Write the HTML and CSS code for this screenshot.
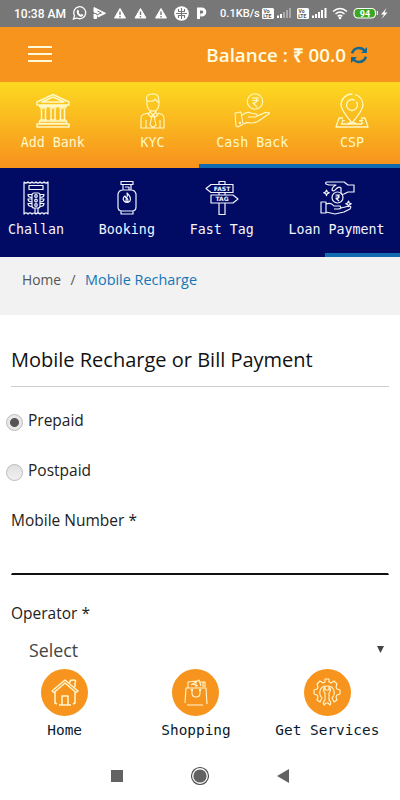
FILE: index.html
```html
<!DOCTYPE html>
<html lang="en">

<head>
    <meta charset="UTF-8">
    <meta name="viewport" content="width=device-width, initial-scale=1.0">
    <title>Mobile Recharge</title>
    <link rel="stylesheet" href="styles.css">
</head>

<body>
    <div class="status-bar">
        <span class="time">10:38 AM</span>
        <svg width="136" height="27" viewBox="72 0 136 27">
            <path d="M73.5 19l1-3.3a6 6 0 1 1 2.4 2.3z" fill="none" stroke="#fff" stroke-width="1.3"/>
            <path d="M77 10.5q.8-1.5 1.7 0l.4 1.2-.6.9q.8 1.5 2.2 2.1l1-.8 1.6.9q0 1.7-1.8 2c-3 0-5.6-3.6-4.5-6.3z" fill="#fff"/>
            <path d="M94 7.5l11.5 5.8-7.5 3.7v-3.5l-4-1.5zM94 14l2.5 1v3.5H94z" fill="#fff" stroke="#fff" stroke-linejoin="round"/>
            <path d="M97.5 11l4 2-4 1.5" fill="none" stroke="#777"/>
            <path d="M120 8.5l5.5 9.5h-11zM140.5 8.5l5.5 9.5h-11zM161 8.5l5.5 9.5h-11z" fill="#fff" stroke="#fff" stroke-linejoin="round"/>
            <path d="M120 11.5v3.5m0 1v1.4M140.5 11.5v3.5m0 1v1.4M161 11.5v3.5m0 1v1.4" stroke="#777" stroke-width="1.4"/>
            <circle cx="181.5" cy="13.5" r="7.3" fill="#fff"/>
            <path d="M176 13.5h11M181.5 8v11M178.5 9v2.5h6V9M178.5 18v-2.5h6V18" fill="none" stroke="#777" stroke-width="1.1"/>
            <path d="M198.5 19V9h3.3a2.7 2.7 0 0 1 0 6h-1.5" fill="none" stroke="#fff" stroke-width="3"/>
        </svg>
        <span class="speed">0.1KB/s</span>
        <svg width="134" height="27" viewBox="261 0 134 27">
            <rect x="262" y="8" width="12" height="11" rx="1.5" fill="#fff"/>
            <rect x="297" y="8" width="12" height="11" rx="1.5" fill="#fff"/>
            <text class="volte" x="263.5" y="13.2">Vo</text>
            <text class="volte" x="263.2" y="18.2">LTE</text>
            <text class="volte" x="298.5" y="13.2">Vo</text>
            <text class="volte" x="298.2" y="18.2">LTE</text>
            <path d="M278 18v-2.5M281 18v-4" stroke="#fff" stroke-width="2"/>
            <path d="M284 18v-6M287 18v-8M290 18V8" stroke="#aaa" stroke-width="2"/>
            <path d="M313 18v-2.5M316 18v-4M319 18v-6M322 18v-8M325.5 18V8" stroke="#fff" stroke-width="2"/>
            <path d="M333 11.5q7-6 14 0M335.5 14q4.5-4 9 0M337.7 16.3q2.3-2 4.6 0" fill="none" stroke="#fff" stroke-width="1.6"/>
            <circle cx="340" cy="18" r="1.3" fill="#fff"/>
            <rect x="354" y="8.5" width="21.5" height="9.5" rx="4" fill="#3aa81e" stroke="#fff" stroke-width="1.2"/>
            <path d="M377.3 11v4" stroke="#fff"/>
            <text class="battery" x="365" y="16.7">94</text>
            <path d="M386.5 8l-5.5 6.5h3l-2.5 4.5 6-6.5h-3z" fill="#fff"/>
        </svg>
    </div>

    <div class="header">
        <div class="menu-button"><span></span><span></span><span></span></div>
        <div class="balance">
            Balance : ₹ 00.0
            <svg width="18" height="18" viewBox="0 0 18 18" fill="none" stroke="#17688f" stroke-width="2.6">
                <path d="M2 7.2Q4 2 9 2q3.5 0 6 3M16 10.8Q14 16 9 16q-3.5 0-6-3"/>
                <path d="M17 1v6h-6zM1 17v-6h6z" fill="#17688f" stroke="none"/>
            </svg>
        </div>
    </div>

    <div class="services services-top">
        <div class="service-list">
            <div class="service">
                <svg width="36" height="36" viewBox="0 0 36 36" stroke-width="1.5">
                    <path d="M2 9L18 1.5 34 9v3H2zM7 9l11-5 11 5zM4 13.5h28M4.5 28h27v2.5h-27zM2 31h32v3H2z"/>
                    <path d="M5 15h7M6.5 16v10.5M10.5 16v10.5M5 27h7M14.5 15h7M16 16v10.5M20 16v10.5M14.5 27h7M24 15h7M25.5 16v10.5M29.5 16v10.5M24 27h7"/>
                </svg>
                <span>Add Bank</span>
            </div>
            <div class="service">
                <svg width="36" height="36" viewBox="0 0 36 36" stroke-width="1.1">
                    <path d="M12 8q-2-7 5-7 7-1 7 7v4q-1 6-6 6t-6-6zM12 8q7 1 8-2l4 4M15 17v2l3 3 3-3v-2M15 19l-2 2 3 3 2-2 2 2 3-2-2-2M18 22l-1.5 3-1.5 7 3 2.5 3-2.5-1.5-7z"/>
                    <path d="M13 20l-5 1.5q-2 1-2 4V35h5v-8M23 20l4 1.5q2 1 2 4V35h-4v-8M11 35h14"/>
                </svg>
                <span>KYC</span>
            </div>
            <div class="service">
                <svg width="36" height="36" viewBox="0 0 36 36" stroke-width="1.1">
                    <circle cx="21" cy="8.5" r="7.7"/>
                    <path d="M18 5h7M18 7.5h7M19 5c5 0 5 5 0 5l4 4"/>
                    <path d="M1 20l6-1 2 12-5 3-2-1zM8 22q5-4 9-2l5 1q3 2-1 3h-7M23 23l7-3q5-1 6 0l-10 7q-4 3-9 3-5-1-7 1M26 22l6-3"/>
                    <circle cx="6" cy="30" r=".6"/>
                </svg>
                <span>Cash Back</span>
            </div>
            <div class="service">
                <svg width="36" height="36" viewBox="0 0 36 36" stroke-width="1.3">
                    <path d="M18 30Q7 17 7 12a11 11 0 0 1 22 0q0 5-11 18z" stroke-dasharray="39 3 90"/>
                    <circle cx="18" cy="12" r="5.5" stroke-dasharray="28 2 9"/>
                    <path d="M9 25H5L2 34h32l-3-9h-4M7 31h21M8 27l3 1M25 28l4-1M14 30h8M7 31l2-3M29 31l-2-3"/>
                </svg>
                <span>CSP</span>
            </div>
        </div>
        <div class="scroll-thumb"></div>
    </div>

    <div class="services services-bottom">
        <div class="service-list">
            <div class="service">
                <svg width="36" height="36" viewBox="0 0 36 36" stroke-width="1.2">
                    <path d="M6 2q2 2 4 0 2 2 4 0 2 2 4 0 2 2 4 0 2 2 4 0 2 2 4 0v32q-2-2-4 0-2-2-4 0-2-2-4 0-2-2-4 0-2-2-4 0-2-2-4 0z"/>
                    <path d="M11 5.5h14v4H11zM14 15q0-2 2-2h4q2 0 2 2v11q0 2-2 2h-4q-2 0-2-2zM17 28v6M20 28v6M14 14.5h-4q0 3 4 3M14 19h-4q0 3 4 3M14 23.5h-4q0 3 4 3M22 14.5h4q0 3-4 3M22 19h4q0 3-4 3M22 23.5h4q0 3-4 3"/>
                    <circle cx="18" cy="16" r="1.3"/><circle cx="18" cy="20.5" r="1.3"/><circle cx="18" cy="25" r="1.3"/>
                </svg>
                <span>Challan</span>
            </div>
            <div class="service">
                <svg width="36" height="36" viewBox="0 0 36 36" stroke-width="1.2">
                    <path d="M12 1.5h12v3H12zM14 5v5M22 5v5M16 7h4v3M9 14q1-4 5-4h8q4 0 5 4v13q0 4-4 4H13q-4 0-4-4zM12 31v3h12v-3"/>
                    <path d="M18 13q5 5 3 8-3 3-6 0-2-3 1-5l1 2q2-1 1-5zM18 18q2 3 0 4-2-1 0-4"/>
                </svg>
                <span>Booking</span>
            </div>
            <div class="service">
                <svg width="36" height="36" viewBox="0 0 36 36" stroke-width="1.2">
                    <path d="M15 5V1.5h6V5M7 4.5h22v8H7l-5-4zM15 12.5v2.5M21 12.5v2.5M7 15h22l5 4-5 4H7zM15 23v11.5h6V23"/>
                    <text class="sign" x="18" y="10.7">FAST</text>
                    <text class="sign" x="18" y="21.2">TAG</text>
                </svg>
                <span>Fast Tag</span>
            </div>
            <div class="service">
                <svg width="36" height="36" viewBox="0 0 36 36" stroke-width="1.2">
                    <path d="M35 5h-6l-4-3H8q-2 0-1 2l3 1h7q-4 2-4 5 2 2 4-1 3-3 5-1v4q0 3 3 2l4-2h6z"/>
                    <circle cx="18.5" cy="17.5" r="5.5"/>
                    <path d="M16.5 15h4.5M16.5 17h4.5M17 15q4 0 2 3.5h-2l3 2.5"/>
                    <path d="M2 22h5v11H2zM7 24q5-2 8 2h6q2 2-1 3h-5M22 28l8-2q3 0 1 3l-6 3-9 2-9-2M7.5 10l.8 2 2 .8-2 .8-.8 2-.8-2-2-.8 2-.8zM29.5 21l.8 2 2 .8-2 .8-.8 2-.8-2-2-.8 2-.8z"/>
                </svg>
                <span>Loan Payment</span>
            </div>
        </div>
        <div class="scroll-thumb"></div>
    </div>

    <div class="breadcrumb">
        <span>Home</span>
        <span class="separator">/</span>
        <span class="current">Mobile Recharge</span>
    </div>

    <div class="content">
        <h1>Mobile Recharge or Bill Payment</h1>
        <label class="radio-row"><input type="radio" name="plan" checked><span>Prepaid</span></label>
        <label class="radio-row"><input type="radio" name="plan"><span>Postpaid</span></label>
        <label class="field-label" for="mobile">Mobile Number *</label>
        <input class="mobile-input" id="mobile" type="text">
        <div class="field-label">Operator *</div>
        <div class="select-box">
            <span>Select</span>
            <svg width="7" height="7" viewBox="0 0 7 7"><path d="M0 0h7L3.5 7z" fill="#444"/></svg>
        </div>
    </div>

    <div class="bottom-nav">
        <div class="nav-item">
            <div class="nav-circle">
                <svg width="30" height="30" viewBox="0 0 30 30" stroke-width="1.5">
                    <path d="M2 13L15 2l13 11-2 1.5L15 5 4 14.5zM5 14v11l2 1M25 14v11l-2 1M9 27h12M12 27v-9h6v9M20 5q-1-3 3-3t2 3v4"/>
                </svg>
            </div>
            <span>Home</span>
        </div>
        <div class="nav-item">
            <div class="nav-circle">
                <svg width="30" height="30" viewBox="0 0 30 30" stroke-width="1.1">
                    <path d="M4 25l1-15h20l1 16M6 27h16M7 10V4l8-1v6M10 7l8-5 2 6M19 4h5v5M22 4v5M12 6l5 2"/>
                    <path d="M11 12v3q0 4 4 4t4-4v-3"/>
                    <circle cx="11" cy="12" r=".6"/><circle cx="19" cy="12" r=".6"/>
                </svg>
            </div>
            <span>Shopping</span>
        </div>
        <div class="nav-item">
            <div class="nav-circle">
                <svg width="30" height="30" viewBox="0 0 30 30" stroke-width="1.1">
                    <path d="M8 24l-3-2 1-3-1-2-3-1v-4l3-1 1-2-1-3 3-3 3 2 2-1V1h4v3l2 1 3-2 3 3-1 3 1 2 3 1v4l-3 1-1 2 1 3-3 2-2-4q3-3 2-7-1-5-7-5t-7 5q-1 4 2 7z"/>
                    <path d="M13 9q-3 3 0 6v7q-3 3-1 5l2-2h2l2 2q2-2-1-5v-7q3-3 0-6v3h-4z"/>
                </svg>
            </div>
            <span>Get Services</span>
        </div>
    </div>

    <div class="system-nav">
        <svg width="12" height="12"><rect width="12" height="12" fill="#626262"/></svg>
        <svg width="20" height="20" viewBox="0 0 20 20"><circle cx="10" cy="10" r="8.5" fill="none" stroke="#444" stroke-width="1.1"/><circle cx="10" cy="10" r="6.6" fill="#626262"/></svg>
        <svg width="12" height="14" viewBox="0 0 12 14"><path d="M0 7L12 0v14z" fill="#626262"/></svg>
    </div>
</body>

</html>
```
FILE: styles.css
```css
* {
    box-sizing: border-box;
}

body {
    margin: 0;
    height: 800px;
    overflow: hidden;
    background-color: #fff;
    font-family: "Open Sans", sans-serif;
    color: #222;
}

svg {
    display: block;
    flex: none;
}

.status-bar {
    display: flex;
    align-items: center;
    height: 27px;
    padding-left: 14px;
    background-color: #777;
    color: #fff;
    font-family: Roboto, sans-serif;
    font-size: 12px;
    font-weight: 500;
    white-space: nowrap;
}

.time {
    width: 58px;
}

.speed {
    width: 41px;
    margin-left: 12px;
    font-size: 11.1px;
}

.volte {
    font: bold 5px Roboto, sans-serif;
    fill: #555;
}

.battery {
    font: bold 9px Roboto, sans-serif;
    fill: #fff;
    text-anchor: middle;
}

.header {
    display: flex;
    justify-content: space-between;
    align-items: center;
    height: 55px;
    padding: 0 32px 0 28px;
    background-color: #f7941e;
}

.menu-button {
    display: flex;
    flex-direction: column;
    gap: 5px;
    width: 24px;
    padding-bottom: 2px;
}

.menu-button span {
    height: 2px;
    background-color: #fffbd8;
}

.balance {
    display: flex;
    align-items: center;
    gap: 4px;
    color: #fffde0;
    font-size: 18.8px;
    font-weight: 600;
    white-space: nowrap;
}

.services {
    display: flex;
    flex-direction: column;
    justify-content: space-between;
    font-family: "DejaVu Sans Mono", monospace;
    font-size: 13.3px;
    line-height: 18px;
}

.services svg {
    fill: none;
    stroke: currentColor;
    stroke-linejoin: round;
}

.services-top {
    height: 86px;
    padding-top: 11px;
    background: linear-gradient(#fdd920, #f7941e 95%);
    color: #fff9c5;
}

.services-bottom {
    height: 89px;
    padding-top: 12px;
    background-color: #020b64;
    color: #f2f4ff;
}

.service-list {
    display: flex;
}

.services-top .service-list {
    padding-left: 3px;
}

.services-top .service {
    width: 99.7px;
}

.services-bottom .service-list {
    gap: 34.8px;
    padding-left: 8px;
}

.service {
    display: flex;
    flex: none;
    flex-direction: column;
    align-items: center;
    gap: 5px;
    white-space: nowrap;
}

.sign {
    font: bold 6px "DejaVu Sans", sans-serif;
    fill: currentColor;
    stroke: none;
    text-anchor: middle;
}

.scroll-thumb {
    height: 4px;
    margin-left: auto;
    background-color: #126bb0;
}

.services-top .scroll-thumb {
    width: 201px;
}

.services-bottom .scroll-thumb {
    width: 75px;
}

.breadcrumb {
    display: flex;
    height: 58px;
    padding: 13px 22px 12px;
    background-color: #f2f2f2;
    color: #555;
    font-size: 13.8px;
    line-height: 20px;
}

.separator {
    margin: 0 9.5px;
}

.current {
    color: #1476b5;
    font-size: 14.4px;
}

.content {
    padding: 28px 11px 0;
    font-size: 15.5px;
}

h1 {
    height: 44px;
    margin: 0 0 23px;
    border-bottom: 1px solid #ccc;
    color: #111;
    font-size: 20px;
    font-weight: 400;
    line-height: 33px;
}

.radio-row {
    display: flex;
    gap: 5px;
    height: 50px;
    margin-left: -5px;
    line-height: 20px;
}

.radio-row input {
    appearance: none;
    width: 17px;
    height: 17px;
    margin: 4px 0 0;
    border: 1px solid #bbb;
    border-radius: 50%;
    background: linear-gradient(#e0e0e0, #f1f1f1);
}

.radio-row input:checked {
    background: radial-gradient(circle, #555 4px, #e8e8e8 5px);
}

.field-label {
    display: block;
    height: 20px;
    line-height: 20px;
}

.mobile-input {
    display: block;
    width: 100%;
    height: 45px;
    margin-bottom: 28px;
    border: 1px solid transparent;
    border-bottom: 2px solid #111;
    background: none;
    outline: none;
}

.select-box {
    display: flex;
    justify-content: space-between;
    align-items: center;
    height: 33px;
    margin-top: 10px;
    padding: 0 5px 0 18px;
    color: #444;
    font-size: 17.8px;
}

.bottom-nav {
    display: flex;
    height: 85px;
    margin: 3px 0 0 -1px;
    padding-right: 7px;
    color: #071a2d;
    font-family: "DejaVu Sans Mono", monospace;
    font-size: 14.4px;
    line-height: 20px;
    white-space: nowrap;
}

.nav-item {
    display: flex;
    flex: 1 1 0;
    flex-direction: column;
    align-items: center;
    gap: 4px;
}

.nav-circle {
    display: flex;
    justify-content: center;
    align-items: center;
    width: 47px;
    height: 47px;
    border-radius: 50%;
    background-color: #f7941e;
}

.nav-circle svg {
    fill: none;
    stroke: #fff7d0;
    stroke-linejoin: round;
}

.system-nav {
    display: flex;
    align-items: center;
    gap: 67px;
    height: 44px;
    padding-left: 111px;
}
```
